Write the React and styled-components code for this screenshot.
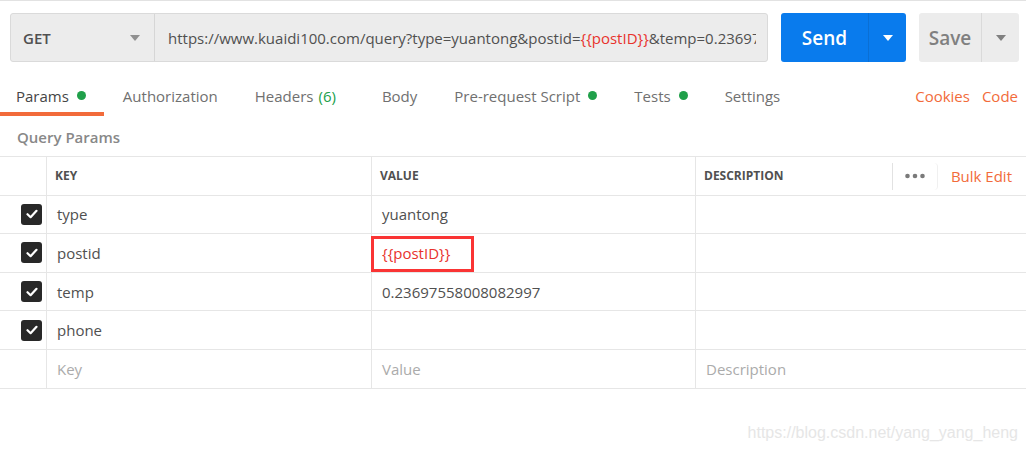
import React from "react";
import styled, { createGlobalStyle } from "styled-components";

const GlobalStyle = createGlobalStyle`
  html, body {
    margin: 0;
    padding: 0;
    background: #ffffff;
  }
  body {
    font-family: "Open Sans", "Liberation Sans", sans-serif;
    color: #505050;
  }
`;

const params = [
  { key: "type", value: "yuantong" },
  { key: "postid", value: "{{postID}}", variable: true },
  { key: "temp", value: "0.23697558008082997" },
  { key: "phone", value: "" },
];

const tabs = [
  { label: "Params", dot: true, active: true },
  { label: "Authorization" },
  { label: "Headers", count: "(6)" },
  { label: "Body" },
  { label: "Pre-request Script", dot: true },
  { label: "Tests", dot: true },
  { label: "Settings" },
];

const Caret = ({ color }) => (
  <svg width="10" height="6" viewBox="0 0 10 6">
    <path d="M0 0 L10 0 L5 6 Z" fill={color} />
  </svg>
);

const Check = () => (
  <svg width="12" height="10" viewBox="0 0 12 10">
    <path
      d="M1.5 5.2 L4.6 8.2 L10.5 1.8"
      fill="none"
      stroke="#ffffff"
      strokeWidth="2.2"
      strokeLinecap="round"
      strokeLinejoin="round"
    />
  </svg>
);

const MoreDots = () => (
  <svg width="20" height="6" viewBox="0 0 20 6">
    <circle cx="2.5" cy="3" r="2.3" fill="#7a7a7a" />
    <circle cx="10" cy="3" r="2.3" fill="#7a7a7a" />
    <circle cx="17.5" cy="3" r="2.3" fill="#7a7a7a" />
  </svg>
);

const App = () => {
  return (
    <Page>
      <GlobalStyle />
      <RequestBar>
        <UrlGroup>
          <Method>
            <span>GET</span>
            <Caret color="#909090" />
          </Method>
          <Url>
            <UrlText>
              https://www.kuaidi100.com/query?type=yuantong&amp;postid=
              <Variable>{"{{postID}}"}</Variable>
              &amp;temp=0.23697
            </UrlText>
          </Url>
        </UrlGroup>
        <SplitButton primary>
          <MainPart>Send</MainPart>
          <ArrowPart primary>
            <Caret color="#ffffff" />
          </ArrowPart>
        </SplitButton>
        <SplitButton small>
          <MainPart>Save</MainPart>
          <ArrowPart>
            <Caret color="#808080" />
          </ArrowPart>
        </SplitButton>
      </RequestBar>

      <TabBar>
        {tabs.map((t) => (
          <Tab key={t.label} active={t.active}>
            {t.label}
            {t.count && <Count>{t.count}</Count>}
            {t.dot && <Dot />}
          </Tab>
        ))}
        <TabLinks>
          <OrangeLink>Cookies</OrangeLink>
          <OrangeLink>Code</OrangeLink>
        </TabLinks>
      </TabBar>

      <SectionTitle>Query Params</SectionTitle>

      <Table>
        <HeadCell />
        <HeadCell>KEY</HeadCell>
        <HeadCell>VALUE</HeadCell>
        <HeadCell last>
          <span>DESCRIPTION</span>
          <HeadActions>
            <MoreButton>
              <MoreDots />
            </MoreButton>
            <OrangeLink>Bulk Edit</OrangeLink>
          </HeadActions>
        </HeadCell>

        {params.map((p) => (
          <React.Fragment key={p.key}>
            <Cell check>
              <Checkbox>
                <Check />
              </Checkbox>
            </Cell>
            <Cell>{p.key}</Cell>
            <Cell variable={p.variable}>
              {p.value}
              {p.variable && <Highlight />}
            </Cell>
            <Cell last />
          </React.Fragment>
        ))}

        <Cell />
        <Cell placeholder>Key</Cell>
        <Cell placeholder>Value</Cell>
        <Cell placeholder last>
          Description
        </Cell>
      </Table>

      <Watermark>https://blog.csdn.net/yang_yang_heng</Watermark>
    </Page>
  );
};

const Page = styled.div`
  width: 1026px;
  height: 451px;
  overflow: hidden;
  border-top: 1px solid #e2e2e2;
  box-sizing: border-box;
`;

const RequestBar = styled.div`
  display: flex;
  align-items: stretch;
  gap: 13px;
  height: 49px;
  padding: 12px 7px 0 10px;
`;

const UrlGroup = styled.div`
  display: flex;
  width: 758px;
  background: #ececec;
  border: 1px solid #dadada;
  border-radius: 3px;
  box-sizing: border-box;
`;

const Method = styled.div`
  display: flex;
  align-items: center;
  justify-content: space-between;
  width: 144px;
  padding: 0 14px 0 12px;
  box-sizing: border-box;
  border-right: 1px solid #d6d6d6;
  font-size: 15px;
  font-weight: 600;
  color: #505050;
`;

const Url = styled.div`
  flex: 1;
  display: flex;
  align-items: center;
  padding: 0 11px 0 13px;
  min-width: 0;
`;

const UrlText = styled.span`
  display: block;
  overflow: hidden;
  white-space: pre;
  font-size: 15px;
  color: #505050;
`;

const Variable = styled.span`
  color: #e8322c;
`;

const SplitButton = styled.div`
  display: flex;
  width: ${(p) => (p.small ? "100px" : "125px")};
  border-radius: 3px;
  overflow: hidden;
  background: ${(p) => (p.primary ? "#097bed" : "#ececec")};
  color: ${(p) => (p.primary ? "#ffffff" : "#808080")};
`;

const MainPart = styled.div`
  flex: 1;
  display: flex;
  align-items: center;
  justify-content: center;
  font-size: 19px;
  font-weight: 600;
`;

const ArrowPart = styled.div`
  width: 37px;
  display: flex;
  align-items: center;
  justify-content: center;
  border-left: 1px solid
    ${(p) => (p.primary ? "#0a6fd4" : "#dadada")};
`;

const TabBar = styled.div`
  display: flex;
  align-items: stretch;
  height: 54px;
  padding-right: 8px;
`;

const Tab = styled.div`
  display: flex;
  align-items: center;
  align-self: flex-end;
  height: 21px;
  padding: 0 18.5px 6px;
  font-size: 15px;
  color: ${(p) => (p.active ? "#454545" : "#707070")};
  border-bottom: 4px solid ${(p) => (p.active ? "#f26b3a" : "transparent")};
  white-space: nowrap;

  &:first-child {
    padding-left: 16px;
  }
`;

const Count = styled.span`
  color: #20a04a;
  margin: 0 9px 0 5px;
`;

const Dot = styled.span`
  width: 9px;
  height: 9px;
  border-radius: 50%;
  background: #20a04a;
  margin-left: 8px;
`;

const TabLinks = styled.div`
  margin-left: auto;
  display: flex;
  align-items: center;
  align-self: flex-end;
  height: 21px;
  padding-bottom: 10px;
  gap: 12px;
`;

const OrangeLink = styled.span`
  color: #f26b3a;
  font-size: 15px;
  font-weight: 400;
`;

const SectionTitle = styled.div`
  height: 40px;
  display: flex;
  align-items: center;
  padding: 1px 0 0 17px;
  box-sizing: border-box;
  font-size: 15px;
  font-weight: 600;
  color: #888888;
`;

const Table = styled.div`
  display: grid;
  grid-template-columns: 47px 325px 324px 1fr;
  grid-auto-rows: 38.6px;
  border-top: 1px solid #e6e6e6;
`;

const HeadCell = styled.div`
  display: flex;
  align-items: center;
  padding-left: 8px;
  border-bottom: 1px solid #e6e6e6;
  border-right: ${(p) => (p.last ? "none" : "1px solid #e6e6e6")};
  font-size: 12px;
  font-weight: 700;
  color: #505050;
`;

const HeadActions = styled.div`
  margin-left: auto;
  display: flex;
  align-items: center;
  align-self: stretch;
  padding: 6px 14px 5px 0;
`;

const MoreButton = styled.span`
  display: flex;
  align-items: center;
  align-self: stretch;
  padding: 0 12px;
  border-left: 1px solid #e2e2e2;
  border-right: 1px solid #f0f0f0;
  border-radius: 0 4px 4px 0;
  margin-right: 13px;
`;

const Cell = styled.div`
  position: relative;
  display: flex;
  align-items: center;
  padding-left: ${(p) => (p.check ? "21px" : "10px")};
  border-bottom: 1px solid #e6e6e6;
  border-right: ${(p) => (p.last ? "none" : "1px solid #e6e6e6")};
  font-size: 15px;
  color: ${(p) =>
    p.placeholder ? "#ababab" : p.variable ? "#e8322c" : "#505050"};
`;

const Checkbox = styled.span`
  display: flex;
  align-items: center;
  justify-content: center;
  width: 21px;
  height: 21px;
  border-radius: 3px;
  background: #282828;
`;

const Highlight = styled.span`
  position: absolute;
  left: -1px;
  top: 2px;
  width: 103px;
  height: 36px;
  border: 3px solid #fa3434;
  box-sizing: border-box;
`;

const Watermark = styled.div`
  text-align: right;
  padding: 35px 8px 0 0;
  font-family: "Liberation Sans", Arial, sans-serif;
  font-size: 16px;
  color: #e6e6e6;
`;

export default App;
